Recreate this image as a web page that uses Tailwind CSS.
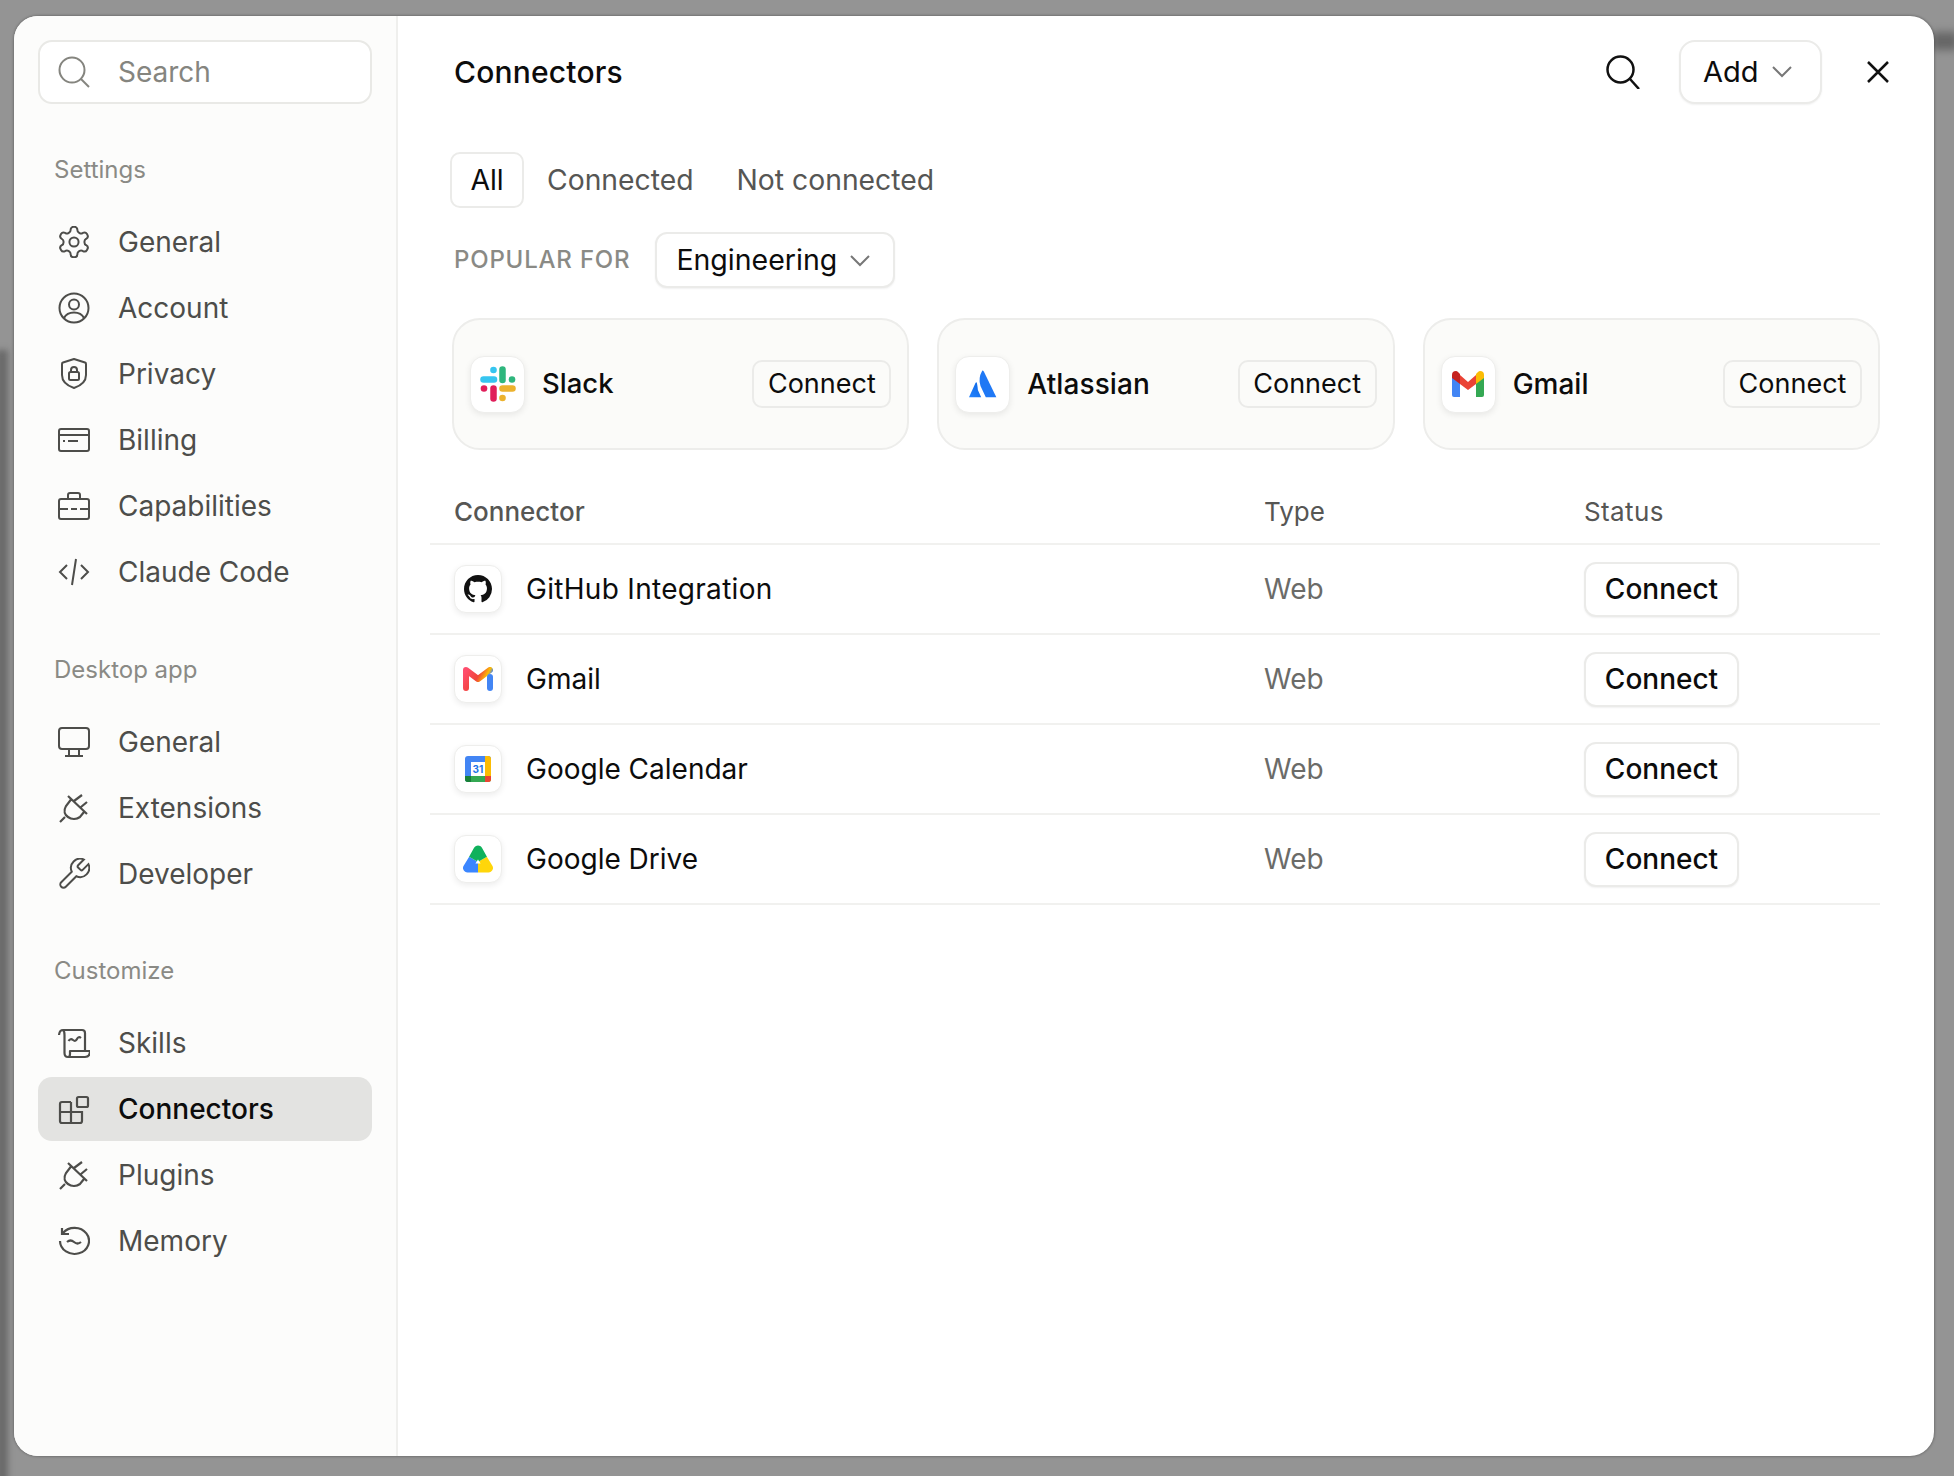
<!doctype html>
<html>
<head>
<meta charset="utf-8">
<script src="https://cdn.jsdelivr.net/npm/@tailwindcss/browser@4"></script>
</head>
<body class="bg-[#949494] overflow-hidden font-['Inter',sans-serif]">
<div class="relative w-[1954px] h-[1476px] pt-4 pl-[14px]">
  <div class="absolute -left-[4px] top-[350px] -bottom-[10px] w-[12px] bg-[#6a6a6a] blur-[3px]"></div>
  <div class="absolute -right-[4px] top-[32px] w-[26px] h-[18px] bg-[#666666] blur-[4px]"></div>
  <div class="relative flex w-[1920px] h-[1440px] rounded-[24px] overflow-hidden bg-white shadow-[0_0_3px_rgba(0,0,0,0.45)]">
    <!-- sidebar -->
    <aside class="w-[384px] shrink-0 bg-[#fcfcfb] border-r-2 border-[#efefed] pl-6 pr-6 pt-6 text-[#4d4d4a]">
      <div class="flex items-center h-[64px] rounded-[14px] border-2 border-[#e9e9e6] bg-white pl-[18px] gap-[28px] text-[#85857f] text-[28px]">
        <svg class="w-8 h-8" viewBox="0 0 32 32" fill="none" stroke="currentColor" stroke-width="2"><circle cx="14" cy="14" r="12.500"/><path d="M23 23l8 8"/></svg>
        <span>Search</span>
      </div>
      <p class="mt-[51px] ml-4 h-[30px] leading-[30px] text-[24px] text-[#8a8a85]">Settings</p>
      <nav class="mt-[25px] flex flex-col gap-[2px] text-[28px]">
        <a class="flex items-center h-[64px] pl-5 gap-7">
          <svg class="w-8 h-8" viewBox="1.500 1.500 21 21" fill="none" stroke="currentColor" stroke-width="1.300"><path d="M12.220 2h-.44a2 2 0 0 0-2 2v.18a2 2 0 0 1-1 1.730l-.43.25a2 2 0 0 1-2 0l-.15-.08a2 2 0 0 0-2.730.73l-.22.38a2 2 0 0 0 .73 2.730l.15.1a2 2 0 0 1 1 1.720v.51a2 2 0 0 1-1 1.740l-.15.09a2 2 0 0 0-.73 2.730l.22.38a2 2 0 0 0 2.730.73l.15-.08a2 2 0 0 1 2 0l.43.25a2 2 0 0 1 1 1.730V20a2 2 0 0 0 2 2h.44a2 2 0 0 0 2-2v-.18a2 2 0 0 1 1-1.730l.43-.25a2 2 0 0 1 2 0l.15.08a2 2 0 0 0 2.730-.73l.22-.39a2 2 0 0 0-.73-2.730l-.15-.08a2 2 0 0 1-1-1.740v-.5a2 2 0 0 1 1-1.740l.15-.09a2 2 0 0 0 .73-2.730l-.22-.38a2 2 0 0 0-2.730-.73l-.15.08a2 2 0 0 1-2 0l-.43-.25a2 2 0 0 1-1-1.730V4a2 2 0 0 0-2-2z"/><circle cx="12" cy="12" r="3"/></svg>
          <span>General</span></a>
        <a class="flex items-center h-[64px] pl-5 gap-7">
          <svg class="w-8 h-8" viewBox="0 0 32 32" fill="none" stroke="currentColor" stroke-width="2"><circle cx="16" cy="16" r="14.500"/><circle cx="16" cy="12.500" r="5"/><path d="M6 26c2-4 6-5.500 10-5.500s8 1.500 10 5.500"/></svg>
          <span>Account</span></a>
        <a class="flex items-center h-[64px] pl-5 gap-7">
          <svg class="w-8 h-8" viewBox="0 0 32 32" fill="none" stroke="currentColor" stroke-width="2" stroke-linejoin="round"><path d="M16 1l11 3.500q1 .3 1 1.500v11c0 7-6 11-12 13-6-2-12-6-12-13V6q0-1.200 1-1.500z"/><rect x="11" y="14" width="10" height="8" rx="1.500"/><path d="M13 14v-2a3 3 0 0 1 6 0v2"/></svg>
          <span>Privacy</span></a>
        <a class="flex items-center h-[64px] pl-5 gap-7">
          <svg class="w-8 h-8" viewBox="0 0 32 32" fill="none" stroke="currentColor" stroke-width="2"><rect x="1" y="5" width="30" height="22" rx="2"/><path d="M1 11h30M5 17h2M10 17h10"/></svg>
          <span>Billing</span></a>
        <a class="flex items-center h-[64px] pl-5 gap-7">
          <svg class="w-8 h-8" viewBox="0 0 32 32" fill="none" stroke="currentColor" stroke-width="2"><rect x="1" y="9" width="30" height="20" rx="2"/><path d="M10 9V5q0-2 2-2h8q2 0 2 2v4M1 19h9M13 19h6M22 19h9"/></svg>
          <span>Capabilities</span></a>
        <a class="flex items-center h-[64px] pl-5 gap-7">
          <svg class="w-8 h-8" viewBox="0 0 32 32" fill="none" stroke="currentColor" stroke-width="2"><path d="M9 9l-7 7 7 7M23 9l7 7-7 7M18 3l-4 26"/></svg>
          <span>Claude Code</span></a>
      </nav>
      <p class="mt-[51px] ml-4 h-[30px] leading-[30px] text-[24px] text-[#8a8a85]">Desktop app</p>
      <nav class="mt-[25px] flex flex-col gap-[2px] text-[28px]">
        <a class="flex items-center h-[64px] pl-5 gap-7">
          <svg class="w-8 h-8" viewBox="0 0 32 32" fill="none" stroke="currentColor" stroke-width="2"><rect x="1" y="2" width="30" height="21" rx="3"/><path d="M11 23v7M21 23v7M7 30h18"/></svg>
          <span>General</span></a>
        <a class="flex items-center h-[64px] pl-5 gap-7">
          <svg class="w-8 h-8" viewBox="0 0 32 32" fill="none" stroke="currentColor" stroke-width="2.200"><path d="M10 4l19 18M13 7.500L8 14c-3 5-1 9 2 11 4 3 9 2 12 0l4-5M16 9l8-6M23 15l6-5M7 25l-5 5"/></svg>
          <span>Extensions</span></a>
        <a class="flex items-center h-[64px] pl-5 gap-7">
          <svg class="w-8 h-8" viewBox="1.500 1.500 21 21" fill="none" stroke="currentColor" stroke-width="1.300"><path d="M14.700 6.300a1 1 0 0 0 0 1.400l1.600 1.600a1 1 0 0 0 1.400 0l3.770-3.770a6 6 0 0 1-7.940 7.940l-6.910 6.910a2.120 2.120 0 0 1-3-3l6.910-6.910a6 6 0 0 1 7.940-7.940l-3.760 3.760z"/></svg>
          <span>Developer</span></a>
      </nav>
      <p class="mt-[50px] ml-4 h-[30px] leading-[30px] text-[24px] text-[#8a8a85]">Customize</p>
      <nav class="mt-[25px] flex flex-col gap-[2px] text-[28px]">
        <a class="flex items-center h-[64px] pl-5 gap-7">
          <svg class="w-8 h-8" viewBox="0 0 32 32" fill="none" stroke="currentColor" stroke-width="2.200" stroke-linejoin="round"><path d="M1 8Q1.500 3 5 3H24Q27 3 27 6V24M5 3Q6.500 4 6.500 8V26Q6.500 30 10 30H27Q32 30 32 24H12V27Q12 30 10 30M10.500 14q2-3 4.500-1t4-1t4-1"/></svg>
          <span>Skills</span></a>
        <a class="flex items-center h-[64px] pl-5 gap-7 rounded-[14px] bg-[#e3e3e1] text-[#0c0c0c] font-medium">
          <svg class="w-8 h-8 text-[#4d4d4a]" viewBox="0 0 32 32" fill="none" stroke="currentColor" stroke-width="2.200"><path d="M13 9H4q-2 0-2 2V28q0 2 2 2H22q2 0 2-2V19H2M13 9V30"/><rect x="19" y="4" width="11" height="10" rx="1.500"/></svg>
          <span>Connectors</span></a>
        <a class="flex items-center h-[64px] pl-5 gap-7">
          <svg class="w-8 h-8" viewBox="0 0 32 32" fill="none" stroke="currentColor" stroke-width="2.200"><path d="M10 4l19 18M13 7.500L8 14c-3 5-1 9 2 11 4 3 9 2 12 0l4-5M16 9l8-6M23 15l6-5M7 25l-5 5"/></svg>
          <span>Plugins</span></a>
        <a class="flex items-center h-[64px] pl-5 gap-7">
          <svg class="w-8 h-8" viewBox="0 0 32 32" fill="none" stroke="currentColor" stroke-width="2.200"><path d="M5 8a14.500 13 0 1 1-3 8M4 3v6h7M9 17q3.500-3 7 0t7 0"/></svg>
          <span>Memory</span></a>
      </nav>
    </aside>
    <!-- main -->
    <main class="flex-1 min-w-0 pl-8 pr-[54px]">
      <header class="flex items-center h-[64px] mt-6 pl-[24px]">
        <h1 class="text-[30px] font-medium tracking-[0.2px] text-[#0c0c0c]">Connectors</h1>
        <svg class="ml-auto w-[34px] h-[34px]" viewBox="0 0 34 34" fill="none" stroke="#111" stroke-width="2.500"><circle cx="14.500" cy="14.500" r="13"/><path d="M24 24l9 10"/></svg>
        <button class="ml-[39px] flex items-center h-[64px] w-[143px] rounded-[16px] border-2 border-[#ebebe9] bg-white pl-[22px] gap-3 text-[29px] text-[#0c0c0c] shadow-[0_1px_2px_rgba(0,0,0,0.06)]">
          <span>Add</span>
          <svg class="w-[22px] h-[14px]" viewBox="0 0 22 14" fill="none" stroke="#777" stroke-width="2"><path d="M2 2l9 9 9-9"/></svg>
        </button>
        <svg class="ml-[45px] -mr-[9px] w-[22px] h-[22px]" viewBox="0 0 22 22" fill="none" stroke="#111" stroke-width="2.500"><path d="M1 1l20 20M21 1L1 21"/></svg>
      </header>
      <div class="mt-[48px] ml-[20px] flex items-center h-[56px] text-[28.300px] text-[#565654]">
        <span class="flex items-center justify-center h-[56px] w-[74px] rounded-[10px] border-2 border-[#ebebe9] text-[#0c0c0c]">All</span>
        <span class="ml-[23px]">Connected</span>
        <span class="ml-[43px]">Not connected</span>
      </div>
      <div class="mt-6 ml-[24px] flex items-center h-[56px]">
        <span class="text-[24px] font-medium tracking-[0.8px] text-[#8a8a85]">POPULAR FOR</span>
        <button class="ml-[25px] flex items-center h-[56px] w-[240px] rounded-[12px] border-2 border-[#ebebe9] bg-white pl-[19px] gap-[13px] text-[28.500px] text-[#0c0c0c] shadow-[0_1px_2px_rgba(0,0,0,0.06)]">
          <span>Engineering</span>
          <svg class="w-5 h-[13px]" viewBox="0 0 20 13" fill="none" stroke="#777" stroke-width="2"><path d="M1 2l9 9 9-9"/></svg>
        </button>
      </div>
      <div class="mt-[30px] ml-[22px] grid grid-cols-3 gap-[28px] h-[132px]">
        <div class="flex items-center rounded-[28px] border-2 border-[#ededeb] bg-[#fbfbf9] pl-[16px] pr-[16px]">
          <span class="flex items-center justify-center w-[55px] h-[57px] rounded-[14px] bg-white border border-[#eeeeec] shadow-[0_2px_6px_rgba(0,0,0,0.08)]">
            <svg class="w-[36px] h-[36px]" viewBox="0 0 36 36" fill="none" stroke-linecap="round" stroke-width="6.500"><path stroke="#36c5f0" d="M3.500 13.500H14"/><circle cx="13.500" cy="4" r="3.300" fill="#36c5f0"/><path stroke="#2eb67d" d="M22.500 3.500V14"/><circle cx="32" cy="13.500" r="3.300" fill="#2eb67d"/><path stroke="#ecb22e" d="M22.500 22.500H32.500"/><circle cx="22.500" cy="32" r="3.300" fill="#ecb22e"/><path stroke="#e01e5a" d="M13.500 22.500V32.500"/><circle cx="4" cy="22.500" r="3.300" fill="#e01e5a"/></svg>
          </span>
          <span class="ml-[17px] text-[27.500px] font-medium text-[#0c0c0c]">Slack</span>
          <button class="ml-auto h-[48px] w-[139px] rounded-[10px] border-2 border-[#ebebe9] bg-[#fbfbf9] text-[27px] text-[#0c0c0c]">Connect</button>
        </div>
        <div class="flex items-center rounded-[28px] border-2 border-[#ededeb] bg-[#fbfbf9] pl-[16px] pr-[16px]">
          <span class="flex items-center justify-center w-[55px] h-[57px] rounded-[14px] bg-white border border-[#eeeeec] shadow-[0_2px_6px_rgba(0,0,0,0.08)]">
            <svg class="w-[29px] h-[28px]" viewBox="70 60 88 84"><defs><linearGradient id="at" x1="1" y1="0" x2="0" y2="1"><stop offset="0" stop-color="#0c66e4"/><stop offset="1" stop-color="#2684ff"/></linearGradient></defs><path fill="#1f78f5" d="M113 62Q100 85 108 108L124 142H156L118 64Q115 60 113 62z"/><path fill="url(#at)" d="M93 98L73 142H110L100 120Q98 100 96 97z"/></svg>
          </span>
          <span class="ml-[17px] text-[28px] font-medium tracking-[0.1px] text-[#0c0c0c]">Atlassian</span>
          <button class="ml-auto h-[48px] w-[139px] rounded-[10px] border-2 border-[#ebebe9] bg-[#fbfbf9] text-[27px] text-[#0c0c0c]">Connect</button>
        </div>
        <div class="flex items-center rounded-[28px] border-2 border-[#ededeb] bg-[#fbfbf9] pl-[16px] pr-[16px]">
          <span class="flex items-center justify-center w-[55px] h-[57px] rounded-[14px] bg-white border border-[#eeeeec] shadow-[0_2px_6px_rgba(0,0,0,0.08)]">
            <svg class="w-[32px] h-[26px]" viewBox="0 0 32 26"><path fill="#4285f4" d="M0 6h8v20H2q-2 0-2-2z"/><path fill="#34a853" d="M24 6h8v18q0 2-2 2h-6z"/><path fill="#ea4335" d="M8 4l8 7 8-7v9l-8 6-8-6z"/><path fill="#c5221f" d="M0 4q0-4 4-4 1 0 2 1l2 2v10L0 7z"/><path fill="#fbbc04" d="M24 3l2-2q1-1 2-1 4 0 4 4v3l-8 6z"/></svg>
          </span>
          <span class="ml-[17px] text-[28px] font-medium text-[#0c0c0c]">Gmail</span>
          <button class="ml-auto h-[48px] w-[139px] rounded-[10px] border-2 border-[#ebebe9] bg-[#fbfbf9] text-[27px] text-[#0c0c0c]">Connect</button>
        </div>
      </div>
      <div class="mt-[30px]">
        <div class="grid grid-cols-[810px_320px_1fr] h-[65px] items-center pl-[24px] border-b-2 border-[#f1f1ef] text-[26px] text-[#565654]">
          <span class="font-medium">Connector</span><span>Type</span><span class="tracking-[0.4px]">Status</span>
        </div>
        <div class="grid grid-cols-[810px_320px_1fr] h-[90px] items-center pl-[24px] border-b-2 border-[#f1f1ef] text-[28px]">
          <div class="flex items-center gap-6 text-[#0c0c0c]">
            <span class="flex items-center justify-center w-12 h-12 rounded-[12px] bg-white border border-[#eeeeec] shadow-[0_2px_6px_rgba(0,0,0,0.08)]">
              <svg class="w-[28px] h-[28px]" viewBox="0 0 16 16" fill="#111"><path d="M8 0C3.580 0 0 3.580 0 8c0 3.540 2.290 6.530 5.470 7.590.4.070.55-.17.55-.38 0-.19-.01-.82-.01-1.490-2.010.370-2.530-.490-2.690-.940-.09-.230-.48-.940-.82-1.130-.28-.150-.68-.520-.01-.530.630-.010 1.080.580 1.230.820.720 1.210 1.870.870 2.330.660.070-.520.280-.870.510-1.070-1.780-.200-3.640-.890-3.640-3.950 0-.870.310-1.590.820-2.150-.080-.200-.360-1.020.080-2.120 0 0 .670-.210 2.200.820.640-.180 1.320-.270 2-.270s1.360.090 2 .270c1.530-1.040 2.200-.820 2.200-.820.440 1.100.160 1.920.080 2.120.510.560.820 1.270.820 2.150 0 3.070-1.870 3.750-3.650 3.950.290.250.540.730.540 1.480 0 1.070-.010 1.930-.010 2.200 0 .210.150.460.550.380A8.010 8.010 0 0 0 16 8c0-4.420-3.580-8-8-8z"/></svg>
            </span><span class="tracking-[0.3px]">GitHub Integration</span>
          </div>
          <span class="text-[#6b6b68]">Web</span>
          <button class="w-[155px] h-[55px] rounded-[12px] border-2 border-[#ebebe9] bg-white text-[28px] font-medium text-[#0c0c0c] shadow-[0_1px_2px_rgba(0,0,0,0.06)]">Connect</button>
        </div>
        <div class="grid grid-cols-[810px_320px_1fr] h-[90px] items-center pl-[24px] border-b-2 border-[#f1f1ef] text-[28px]">
          <div class="flex items-center gap-6 text-[#0c0c0c]">
            <span class="flex items-center justify-center w-12 h-12 rounded-[12px] bg-white border border-[#eeeeec] shadow-[0_2px_6px_rgba(0,0,0,0.08)]">
              <svg class="w-[30px] h-[24px]" viewBox="0 0 30 24"><defs><linearGradient id="gm" x1="0" y1="0" x2="1" y2="0.400"><stop offset="0" stop-color="#ff4d6d"/><stop offset="0.550" stop-color="#f04438"/><stop offset="0.850" stop-color="#fbbc04"/><stop offset="1" stop-color="#4285f4"/></linearGradient></defs><path fill="none" stroke="url(#gm)" stroke-width="6" stroke-linejoin="round" stroke-linecap="round" d="M3 21V3l12 9 12-9"/><path fill="none" stroke="#4285f4" stroke-width="6" stroke-linecap="round" d="M27 10v11"/></svg>
            </span><span>Gmail</span>
          </div>
          <span class="text-[#6b6b68]">Web</span>
          <button class="w-[155px] h-[55px] rounded-[12px] border-2 border-[#ebebe9] bg-white text-[28px] font-medium text-[#0c0c0c] shadow-[0_1px_2px_rgba(0,0,0,0.06)]">Connect</button>
        </div>
        <div class="grid grid-cols-[810px_320px_1fr] h-[90px] items-center pl-[24px] border-b-2 border-[#f1f1ef] text-[28px]">
          <div class="flex items-center gap-6 text-[#0c0c0c]">
            <span class="flex items-center justify-center w-12 h-12 rounded-[12px] bg-white border border-[#eeeeec] shadow-[0_2px_6px_rgba(0,0,0,0.08)]">
              <span class="relative block w-[26px] h-[26px] rounded-[3px] bg-[#4285f4] overflow-hidden">
                <span class="absolute left-0 bottom-0 w-full h-[6px] bg-[#34a853]"></span>
                <span class="absolute right-0 top-0 h-full w-[6px] bg-[#fbbc04]"></span>
                <span class="absolute left-0 bottom-0 w-[6px] h-[6px] bg-[#188038]"></span>
                <span class="absolute right-0 bottom-0 w-[6px] h-[6px] bg-[#ea4335]"></span>
                <span class="absolute left-[6px] top-[6px] w-[14px] h-[14px] bg-white text-[#1a73e8] text-[10px] leading-[14px] font-bold text-center">31</span>
              </span>
            </span><span>Google Calendar</span>
          </div>
          <span class="text-[#6b6b68]">Web</span>
          <button class="w-[155px] h-[55px] rounded-[12px] border-2 border-[#ebebe9] bg-white text-[28px] font-medium text-[#0c0c0c] shadow-[0_1px_2px_rgba(0,0,0,0.06)]">Connect</button>
        </div>
        <div class="grid grid-cols-[810px_320px_1fr] h-[90px] items-center pl-[24px] border-b-2 border-[#f1f1ef] text-[28px]">
          <div class="flex items-center gap-6 text-[#0c0c0c]">
            <span class="flex items-center justify-center w-12 h-12 rounded-[12px] bg-white border border-[#eeeeec] shadow-[0_2px_6px_rgba(0,0,0,0.08)]">
              <svg class="w-[32px] h-[28px]" viewBox="0 0 32 28" fill="none" stroke-width="9" stroke-linejoin="round"><path stroke="#ffd60a" d="M21 14l5.500 9H16"/><path stroke="#3b86ff" d="M11 14L5.500 23H16"/><path stroke="#0fb15c" d="M11 14l5-9 5 9"/></svg>
            </span><span>Google Drive</span>
          </div>
          <span class="text-[#6b6b68]">Web</span>
          <button class="w-[155px] h-[55px] rounded-[12px] border-2 border-[#ebebe9] bg-white text-[28px] font-medium text-[#0c0c0c] shadow-[0_1px_2px_rgba(0,0,0,0.06)]">Connect</button>
        </div>
      </div>
    </main>
  </div>
</div>
</body>
</html>
